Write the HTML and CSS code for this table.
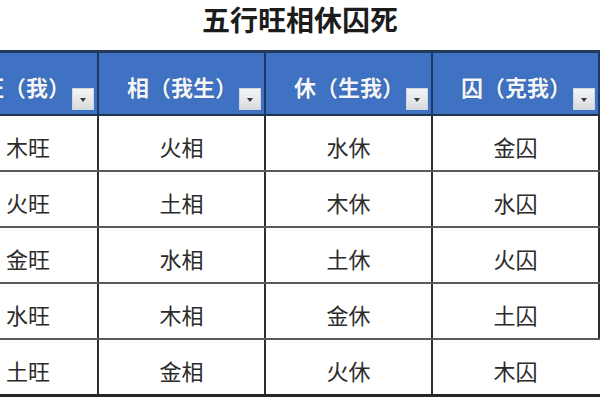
FILE: index.html
```html
<!DOCTYPE html>
<html lang="zh">
<head>
<meta charset="utf-8">
<link rel="stylesheet" href="styles.css">
</head>
<body>
<div class="page">
  <h1 class="title">五行旺相休囚死</h1>
  <div class="frame">
    <table class="grid">
      <colgroup>
        <col class="c1"><col class="c2"><col class="c3"><col class="c4">
      </colgroup>
      <thead>
        <tr>
          <th><div class="hd"><span class="ht">旺（我）</span><span class="dd"></span></div></th>
          <th><div class="hd"><span class="ht">相（我生）</span><span class="dd"></span></div></th>
          <th><div class="hd"><span class="ht">休（生我）</span><span class="dd"></span></div></th>
          <th><div class="hd"><span class="ht">囚（克我）</span><span class="dd"></span></div></th>
        </tr>
      </thead>
      <tbody>
        <tr><td>木旺</td><td>火相</td><td>水休</td><td>金囚</td></tr>
        <tr><td>火旺</td><td>土相</td><td>木休</td><td>水囚</td></tr>
        <tr><td>金旺</td><td>水相</td><td>土休</td><td>火囚</td></tr>
        <tr><td>水旺</td><td>木相</td><td>金休</td><td>土囚</td></tr>
        <tr class="last"><td>土旺</td><td>金相</td><td>火休</td><td>木囚</td></tr>
      </tbody>
    </table>
  </div>
</div>
</body>
</html>
```
FILE: styles.css
```css
html, body {
  margin: 0;
  padding: 0;
  background: #ffffff;
}
body {
  width: 600px;
  height: 400px;
  overflow: hidden;
  font-family: "Noto Sans CJK SC", "Noto Sans", sans-serif;
}
.page {
  width: 600px;
}
.title {
  margin: 0;
  height: 50px;
  line-height: 38px;
  text-align: center;
  font-size: 28px;
  font-weight: 700;
  color: #1c1c1c;
}
.frame {
  width: 600px;
  overflow: hidden;
}
.grid {
  margin-left: -43px;
  border-collapse: collapse;
  table-layout: fixed;
  width: 641px;
}
.c1 { width: 140px; }
.c2 { width: 167px; }
.c3 { width: 167px; }
.c4 { width: 167px; }
.grid th {
  padding: 0;
  background: #3f72c3;
  border-top: 3px solid #22395c;
  border-bottom: 2px solid #22344f;
  border-left: 2px solid #1e3963;
  border-right: 2px solid #1e3963;
}
.hd {
  height: 61px;
  display: flex;
  justify-content: flex-end;
  align-items: flex-end;
  padding-right: 3px;
  gap: 2px;
}
.ht {
  color: #f3f6fb;
  font-size: 22px;
  font-weight: 700;
  line-height: 22px;
  margin-bottom: 17px;
  text-shadow: 0 0 1px rgba(20, 40, 80, 0.6);
}
.dd {
  width: 22px;
  height: 22px;
  margin-bottom: 4px;
  box-sizing: border-box;
  border: 1px solid #cfd6df;
  background: linear-gradient(#f4f5f6, #d9dcdf);
  position: relative;
  flex: none;
}
.dd::after {
  content: "";
  position: absolute;
  left: 7px;
  top: 9px;
  border-left: 3px solid transparent;
  border-right: 3px solid transparent;
  border-top: 4px solid #3a3a3a;
}
.grid td {
  height: 56px;
  padding: 0;
  padding-top: 6px;
  text-align: center;
  font-size: 22px;
  color: #2b2b2b;
  border-left: 2px solid #2e2e2e;
  border-right: 2px solid #2e2e2e;
  border-bottom: 2px solid #5a5a5a;
  box-sizing: border-box;
  vertical-align: middle;
}
.grid tr.last td {
  border-bottom: 3px solid #262626;
}
.grid tr.last td:last-child {
  border-right-color: transparent;
}
```
